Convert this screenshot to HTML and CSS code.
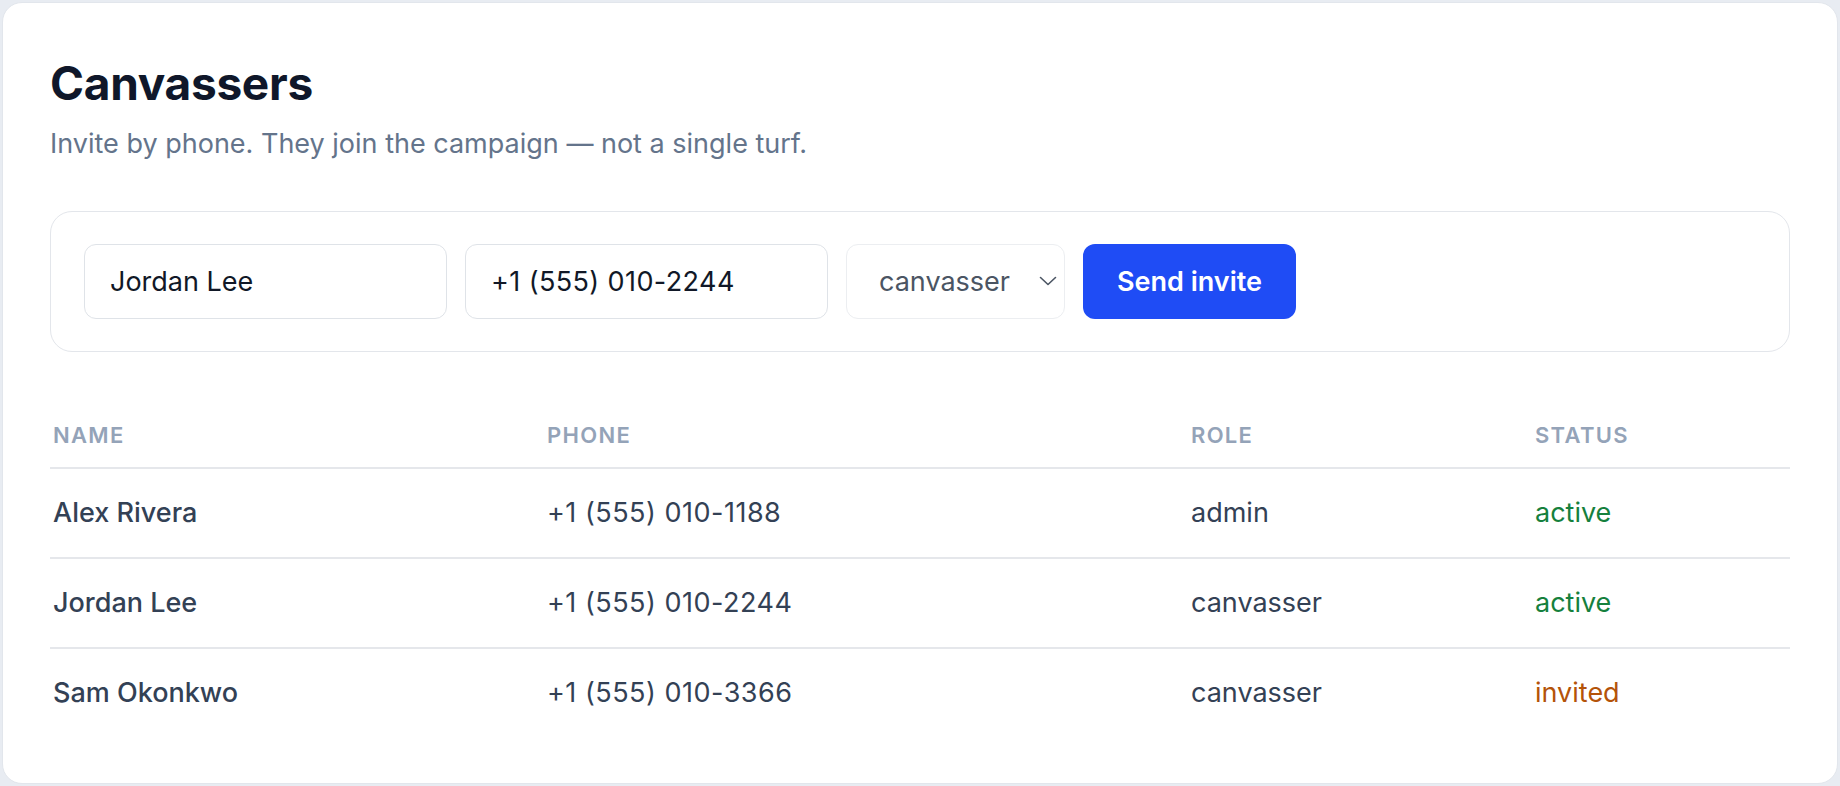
FILE: index.html
```html
<!DOCTYPE html>
<html lang="en">

<head>
  <meta charset="UTF-8">
  <meta name="viewport" content="width=device-width, initial-scale=1.0">
  <title>Canvassers</title>
  <link rel="stylesheet" href="styles.css">
</head>

<body>
  <!-- canvassers card -->
  <div class="card">
    <h1 class="title">Canvassers</h1>
    <p class="subtitle">Invite by phone. They join the campaign — not a single turf.</p>

    <form class="invite">
      <input class="field name" type="text" value="Jordan Lee">
      <input class="field phone" type="text" value="+1 (555) 010-2244">
      <div class="selectWrap">
        <select class="field role">
          <option>canvasser</option>
          <option>admin</option>
        </select>
        <svg class="chevron" width="18" height="10" viewBox="0 0 18 10">
          <path d="M1.5 1.5 L9 8.5 L16.5 1.5" fill="none" stroke="#4b5563" stroke-width="1.6" stroke-linecap="round" stroke-linejoin="round"/>
        </svg>
      </div>
      <button class="send" type="button">Send invite</button>
    </form>

    <table class="people">
      <thead>
        <tr>
          <th class="colName">Name</th>
          <th class="colPhone">Phone</th>
          <th class="colRole">Role</th>
          <th>Status</th>
        </tr>
      </thead>
      <tbody>
        <tr>
          <td class="who">Alex Rivera</td>
          <td class="tel">+1 (555) 010-1188</td>
          <td>admin</td>
          <td class="active">active</td>
        </tr>
        <tr>
          <td class="who">Jordan Lee</td>
          <td class="tel">+1 (555) 010-2244</td>
          <td>canvasser</td>
          <td class="active">active</td>
        </tr>
        <tr>
          <td class="who">Sam Okonkwo</td>
          <td class="tel">+1 (555) 010-3366</td>
          <td>canvasser</td>
          <td class="invited">invited</td>
        </tr>
      </tbody>
    </table>
  </div>
</body>

</html>
```

FILE: styles.css
```css
html,
body {
  margin: 0;
  padding: 0;
}

body {
  background-color: #e8ecf2;
  font-family: Inter, 'Liberation Sans', Arial, sans-serif;
  color: #334155;
}

.card {
  box-sizing: border-box;
  margin: 2px;
  height: calc(100vh - 4px);
  padding: 52px 47px 0 47px;
  background-color: #ffffff;
  border: 1px solid #e2e6ec;
  border-radius: 20px;
}

.title {
  margin: 0;
  font-size: 46px;
  line-height: 56px;
  font-weight: 700;
  color: #0f172a;
  letter-spacing: -0.3px;
}

.subtitle {
  margin: 15px 0 0 0;
  font-size: 27px;
  line-height: 36px;
  color: #64748b;
}

.invite {
  display: flex;
  align-items: center;
  gap: 18px;
  margin-top: 49px;
  padding: 32px 33px;
  border: 1px solid #e3e6eb;
  border-radius: 22px;
}

.field {
  box-sizing: border-box;
  height: 75px;
  padding: 0 25px;
  border: 1px solid #dfe3e8;
  border-radius: 12px;
  background-color: #ffffff;
  font-family: Inter, 'Liberation Sans', Arial, sans-serif;
  font-size: 27px;
  color: #111827;
  outline: none;
}

.name,
.phone {
  width: 363px;
}

.phone {
  letter-spacing: 0.4px;
}

.selectWrap {
  position: relative;
}

.role {
  width: 219px;
  padding-left: 32px;
  border-color: #eceef1;
  color: #4b5563;
  appearance: none;
  -webkit-appearance: none;
}

.chevron {
  position: absolute;
  right: 8px;
  top: 32px;
  pointer-events: none;
}

.send {
  height: 75px;
  padding: 0 34px;
  border: none;
  border-radius: 12px;
  background-color: #1f4cf5;
  color: #ffffff;
  font-family: Inter, 'Liberation Sans', Arial, sans-serif;
  font-size: 27px;
  font-weight: 600;
}

.people {
  width: 100%;
  margin-top: 51px;
  border-collapse: collapse;
  table-layout: fixed;
}

.people th {
  padding: 17px 0 17px 3px;
  text-align: left;
  font-size: 22px;
  line-height: 30px;
  font-weight: 600;
  letter-spacing: 1.3px;
  text-transform: uppercase;
  color: #94a3b8;
  border-bottom: 2px solid #e5e7eb;
}

.people .colName {
  width: 491px;
}

.people .colPhone {
  width: 641px;
}

.people .colRole {
  width: 341px;
}

.people td {
  padding: 25px 0 25px 3px;
  font-size: 27px;
  line-height: 38px;
  color: #334155;
  border-bottom: 2px solid #e5e7eb;
}

.people tbody tr:last-child td {
  border-bottom: none;
}

.people .who {
  font-weight: 500;
}

.people .tel {
  letter-spacing: 0.5px;
}

.people .active {
  color: #15803d;
}

.people .invited {
  color: #b45309;
}
```
